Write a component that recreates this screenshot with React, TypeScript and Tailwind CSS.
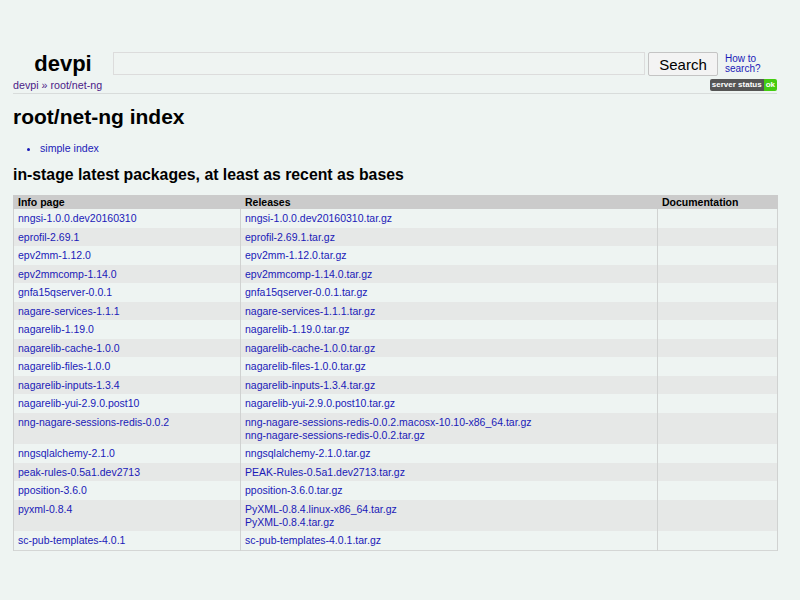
import React from "react";

const rows: { info: string; rel: string[] }[] = [
  { info: "nngsi-1.0.0.dev20160310", rel: ["nngsi-1.0.0.dev20160310.tar.gz"] },
  { info: "eprofil-2.69.1", rel: ["eprofil-2.69.1.tar.gz"] },
  { info: "epv2mm-1.12.0", rel: ["epv2mm-1.12.0.tar.gz"] },
  { info: "epv2mmcomp-1.14.0", rel: ["epv2mmcomp-1.14.0.tar.gz"] },
  { info: "gnfa15qserver-0.0.1", rel: ["gnfa15qserver-0.0.1.tar.gz"] },
  { info: "nagare-services-1.1.1", rel: ["nagare-services-1.1.1.tar.gz"] },
  { info: "nagarelib-1.19.0", rel: ["nagarelib-1.19.0.tar.gz"] },
  { info: "nagarelib-cache-1.0.0", rel: ["nagarelib-cache-1.0.0.tar.gz"] },
  { info: "nagarelib-files-1.0.0", rel: ["nagarelib-files-1.0.0.tar.gz"] },
  { info: "nagarelib-inputs-1.3.4", rel: ["nagarelib-inputs-1.3.4.tar.gz"] },
  { info: "nagarelib-yui-2.9.0.post10", rel: ["nagarelib-yui-2.9.0.post10.tar.gz"] },
  {
    info: "nng-nagare-sessions-redis-0.0.2",
    rel: [
      "nng-nagare-sessions-redis-0.0.2.macosx-10.10-x86_64.tar.gz",
      "nng-nagare-sessions-redis-0.0.2.tar.gz",
    ],
  },
  { info: "nngsqlalchemy-2.1.0", rel: ["nngsqlalchemy-2.1.0.tar.gz"] },
  { info: "peak-rules-0.5a1.dev2713", rel: ["PEAK-Rules-0.5a1.dev2713.tar.gz"] },
  { info: "pposition-3.6.0", rel: ["pposition-3.6.0.tar.gz"] },
  { info: "pyxml-0.8.4", rel: ["PyXML-0.8.4.linux-x86_64.tar.gz", "PyXML-0.8.4.tar.gz"] },
  { info: "sc-pub-templates-4.0.1", rel: ["sc-pub-templates-4.0.1.tar.gz"] },
];

export default function App() {
  return (
    <div
      className="min-h-[600px] w-[800px] bg-[#eef4f2] text-black"
      style={{ fontFamily: '"Liberation Sans", Arial, sans-serif' }}
    >
      <div className="ml-[13px] w-[764px] pt-[52px]">
        {/* top row */}
        <div className="flex h-[24px] items-center">
          <div className="w-[100px] text-center text-[22px] font-bold leading-[24px]">devpi</div>
          <div className="h-[23px] flex-1 self-start border border-[#dcdcdc] bg-[#eff4f2]"></div>
          <div className="ml-[3px] flex h-[24px] w-[70px] items-center justify-center rounded-[2px] border border-[#c4c4c4] bg-[#f3f3f3] text-[15px] leading-none">
            Search
          </div>
          <div className="ml-[7px] w-[52px] text-[10px] leading-[10px] text-[#1a1ab8]">
            How to
            <br />
            search?
          </div>
        </div>
        {/* breadcrumb + status */}
        <div className="mt-[3px] flex h-[12px] items-center justify-between">
          <div className="text-[10.7px] leading-[12px] text-[#4b1a87]">devpi » root/net-ng</div>
          <div className="flex h-[12px] items-stretch text-[8px] font-bold leading-[12px] text-white">
            <span className="rounded-l-[2px] bg-[#555555] px-[2px]">server status</span>
            <span className="rounded-r-[2px] bg-[#44cc11] px-[2px]">ok</span>
          </div>
        </div>
        <div className="mt-[2px] h-px bg-[#d8dcdb]"></div>

        <h1 className="mt-[11px] text-[21px] font-bold leading-[24px]">root/net-ng index</h1>

        <ul className="mt-[13px] list-disc pl-[27px] text-[10.6px] leading-[13px] text-[#1a1ab8]">
          <li>simple index</li>
        </ul>

        <h2 className="mt-[10px] text-[15.8px] font-bold leading-[20px]">
          in-stage latest packages, at least as recent as bases
        </h2>

        <table className="mt-[10px] w-[764px] table-fixed border-collapse text-[10.5px]">
          <colgroup>
            <col className="w-[227px]" />
            <col className="w-[417px]" />
            <col className="w-[120px]" />
          </colgroup>
          <thead>
            <tr className="bg-[#cbcbcb] text-left font-bold leading-[14px]">
              <th className="border-x border-[#cbcbcb] pl-[4px]">Info page</th>
              <th className="border-x border-[#cbcbcb] pl-[4px]">Releases</th>
              <th className="border-x border-[#cbcbcb] pl-[4px]">Documentation</th>
            </tr>
          </thead>
          <tbody className="border-b border-[#d4d6d5] text-[#1a1ab8]">
            {rows.map((r, i) => (
              <tr key={r.info} className={i % 2 === 1 ? "bg-[#e6e8e7]" : "bg-[#eef4f2]"}>
                <td className="border-x border-[#d0d2d1] pb-[2.5px] pl-[4px] pt-[3px] align-top leading-[13px]">
                  {r.info}
                </td>
                <td className="border-x border-[#d0d2d1] pb-[2.5px] pl-[4px] pt-[3px] align-top leading-[13px]">
                  {r.rel.map((x) => (
                    <div key={x}>{x}</div>
                  ))}
                </td>
                <td className="border-x border-[#d0d2d1] pb-[2.5px] pl-[4px] pt-[3px] align-top leading-[13px]"></td>
              </tr>
            ))}
          </tbody>
        </table>
      </div>
    </div>
  );
}
